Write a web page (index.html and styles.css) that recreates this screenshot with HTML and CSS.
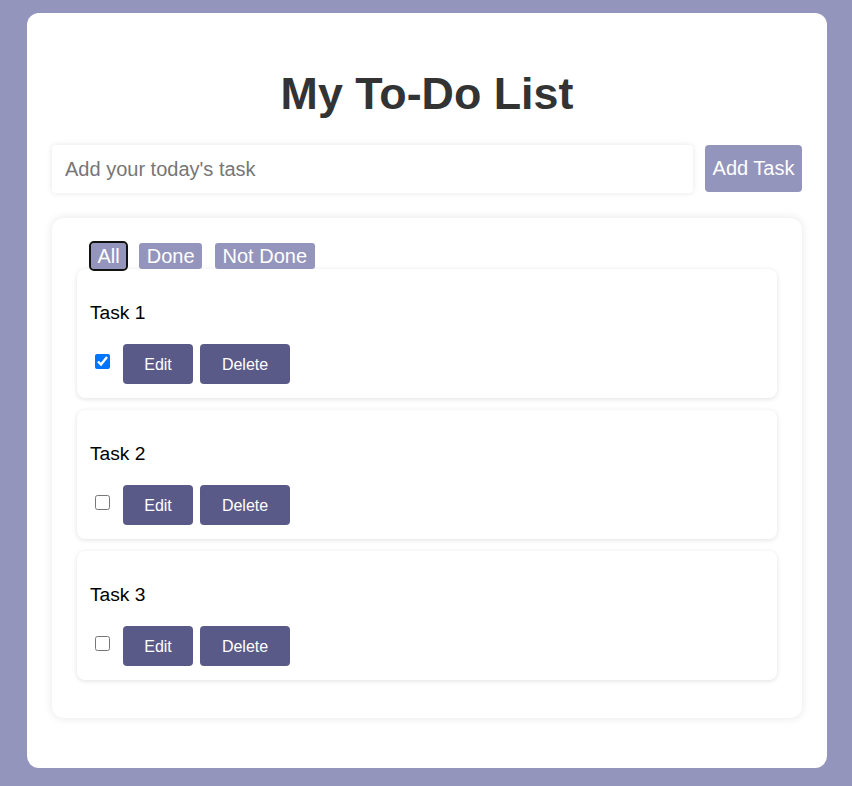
FILE: index.html
```html
<!DOCTYPE html>
<html lang="en">
<head>
<meta charset="utf-8">
<title>My To-Do List</title>
<link rel="stylesheet" href="styles.css">
</head>
<body>
<div class="app">
  <h1 class="title">My To-Do List</h1>
  <div class="add-row">
    <input class="task-input" type="text" placeholder="Add your today's task">
    <button class="add-btn">Add Task</button>
  </div>
  <div class="panel">
    <div class="filters">
      <button class="filter active">All</button>
      <button class="filter">Done</button>
      <button class="filter">Not Done</button>
    </div>
    <div class="task">
      <p class="task-name">Task 1</p>
      <div class="task-actions">
        <input class="check" type="checkbox" checked>
        <button class="act edit">Edit</button>
        <button class="act delete">Delete</button>
      </div>
    </div>
    <div class="task">
      <p class="task-name">Task 2</p>
      <div class="task-actions">
        <input class="check" type="checkbox">
        <button class="act edit">Edit</button>
        <button class="act delete">Delete</button>
      </div>
    </div>
    <div class="task">
      <p class="task-name">Task 3</p>
      <div class="task-actions">
        <input class="check" type="checkbox">
        <button class="act edit">Edit</button>
        <button class="act delete">Delete</button>
      </div>
    </div>
  </div>
</div>
</body>
</html>
```

FILE: styles.css
```css
* { box-sizing: border-box; }

html, body {
  margin: 0;
  padding: 0;
}

body {
  background: #9495bc;
  font-family: "Liberation Sans", Arial, sans-serif;
  padding: 13px 25px 18px 27px;
  min-height: 786px;
}

.app {
  width: 800px;
  background: #ffffff;
  border-radius: 12px;
  padding: 25px 25px 50px 25px;
}

.title {
  margin: 30px 0 27px;
  font-size: 44.8px;
  line-height: 50px;
  font-weight: bold;
  color: #333333;
  text-align: center;
}

.add-row {
  display: flex;
  gap: 12px;
  height: 48px;
}

.task-input {
  flex: 1;
  height: 48px;
  border: none;
  border-radius: 4px;
  box-shadow: 0 0 6px rgba(0, 0, 0, 0.1);
  padding: 0 13px;
  font-family: "Liberation Sans", Arial, sans-serif;
  font-size: 20px;
  color: #333;
  outline: none;
}

.task-input::placeholder {
  color: #767676;
}

.add-btn {
  width: 97px;
  height: 47px;
  border: none;
  border-radius: 4px;
  background: #9495bc;
  color: #ffffff;
  font-family: "Liberation Sans", Arial, sans-serif;
  font-size: 20px;
  padding: 0 6px;
}

.panel {
  margin-top: 25px;
  background: #ffffff;
  border-radius: 12px;
  box-shadow: 0 0 10px rgba(0, 0, 0, 0.1);
  padding: 25px 25px 26px 25px;
}

.filters {
  display: flex;
  gap: 13px;
  padding-left: 14px;
  height: 26px;
}

.filter {
  height: 26px;
  border: none;
  border-radius: 3px;
  background: #9495bc;
  color: #ffffff;
  font-family: "Liberation Sans", Arial, sans-serif;
  font-size: 20px;
  line-height: 26px;
  padding: 0 7.5px;
}

.filter.active {
  outline: 2px solid #111111;
  outline-offset: 0;
  border-radius: 3px;
  padding: 0 6.5px;
}

.task {
  background: #ffffff;
  border-radius: 8px;
  box-shadow: 0 1px 5px rgba(0, 0, 0, 0.12);
  padding: 13px 13px 14px 13px;
  margin-bottom: 12px;
}

.task-name {
  margin: 20px 0 20px;
  font-size: 19.2px;
  line-height: 22px;
  color: #000000;
}

.task-actions {
  display: flex;
  align-items: center;
  height: 40px;
}

.check {
  width: 15px;
  height: 15px;
  margin: 0 13px 5px 5px;
}

.act {
  height: 40px;
  border: none;
  border-radius: 4px;
  background: #5a5a89;
  color: #ffffff;
  font-family: "Liberation Sans", Arial, sans-serif;
  font-size: 16px;
  padding-top: 2px;
}

.edit {
  width: 70px;
  margin-right: 7px;
}

.delete {
  width: 90px;
}
```
